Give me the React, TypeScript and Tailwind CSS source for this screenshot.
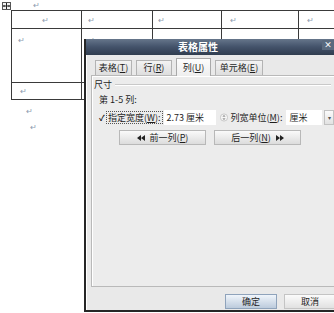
import React from "react";

const F = { fontFamily: '"Noto Sans CJK SC", "Liberation Sans", sans-serif' };

function Mark({ className = "" }: { className?: string }) {
  return <div className={"h-[8px] text-[8px] leading-[8px] text-[#8d9bb0] " + className}>↵</div>;
}

function U({ c }: { c: string }) {
  return <span className="underline underline-offset-1">{c}</span>;
}

function Tab({ label, k, w, sel }: { label: string; k: string; w: string; sel?: boolean }) {
  return (
    <div
      className={
        "flex items-center justify-center border border-b-0 text-[9px] text-[#1e1e1e] " +
        w +
        (sel
          ? " h-[18px] -mb-px border-[#a9a9a9] bg-gradient-to-b from-[#fdfdfd] to-[#eeeeee] z-10"
          : " h-[15px] border-[#b3b3b3] bg-gradient-to-b from-[#f3f3f3] to-[#dedede]")
      }
    >
      {label}(<U c={k} />)
    </div>
  );
}

function DoubleLeft() {
  return (
    <svg width="8" height="6" viewBox="0 0 8 6">
      <path d="M4 0 L0 3 L4 6 Z M8 0 L4 3 L8 6 Z" fill="#222" />
    </svg>
  );
}
function DoubleRight() {
  return (
    <svg width="8" height="6" viewBox="0 0 8 6">
      <path d="M0 0 L4 3 L0 6 Z M4 0 L8 3 L4 6 Z" fill="#222" />
    </svg>
  );
}

export default function App() {
  return (
    <div className="relative w-[334px] h-[313px] overflow-hidden bg-white" style={F}>
      {/* document */}
      <div className="flex h-[10px] items-start">
        <div className="ml-[2px] mt-[2px] flex h-[8px] w-[9px] items-center justify-center border border-[#555] bg-[#f4f4f4]">
          <svg width="7" height="6" viewBox="0 0 7 6">
            <path d="M3.5 0 V6 M0 3 H7" stroke="#222" strokeWidth="1" />
            <path d="M0 3 L1.5 1.8 V4.2 Z M7 3 L5.5 1.8 V4.2 Z" fill="#222" />
          </svg>
        </div>
        <Mark className="ml-[22px] mt-[1px]" />
      </div>
      <div className="ml-[11px] grid w-[400px] grid-cols-[70px_71px_69px_77px_113px] border-l border-t border-[#3a3a3a]">
        <div className="flex h-[18px] items-center border-b border-r border-[#3a3a3a] pl-[30px]"><Mark /></div>
        <div className="flex h-[18px] items-center border-b border-r border-[#3a3a3a] pl-[6px]"><Mark /></div>
        <div className="flex h-[18px] items-center border-b border-r border-[#3a3a3a] pl-[5px]"><Mark /></div>
        <div className="flex h-[18px] items-center border-b border-r border-[#3a3a3a] pl-[8px]"><Mark /></div>
        <div className="flex h-[18px] items-center border-b border-r border-[#3a3a3a] pl-[8px]"><Mark /></div>

        <div className="h-[54px] border-b border-r border-[#3a3a3a] pl-[6px] pt-[7px]"><Mark /></div>
        <div className="h-[54px] border-b border-r border-[#3a3a3a] pl-[6px] pt-[7px]"><Mark /></div>
        <div className="h-[54px] border-b border-r border-[#3a3a3a]" />
        <div className="h-[54px] border-b border-r border-[#3a3a3a]" />
        <div className="h-[54px] border-b border-r border-[#3a3a3a]" />

        <div className="flex h-[17px] items-center border-b border-r border-[#3a3a3a] pl-[8px]"><Mark /></div>
        <div className="h-[17px] border-b border-r border-[#3a3a3a]" />
        <div className="h-[17px] border-b border-r border-[#3a3a3a]" />
        <div className="h-[17px] border-b border-r border-[#3a3a3a]" />
        <div className="h-[17px] border-b border-r border-[#3a3a3a]" />
      </div>
      <Mark className="ml-[26px] mt-[7px]" />
      <Mark className="ml-[30px] mt-[8px]" />

      {/* dialog */}
      <div className="absolute left-[84px] top-[39px] flex h-[273px] w-[258px] flex-col border-b-2 border-l-2 border-[#262626] bg-[#e9e9e9]">
        <div className="relative flex h-[16px] items-center bg-gradient-to-b from-[#66768b] via-[#43526a] to-[#303d4f] pl-[92px]">
          <span className="text-[10px] font-bold leading-none text-white">表格属性</span>
          <span className="absolute left-[236px] top-[1px] flex h-[10px] w-[12px] items-center justify-center bg-[#5a6a7e] text-[8px] font-bold leading-none text-white">×</span>
        </div>
        <div className="flex flex-1 flex-col border-l border-white pl-[4px] pr-[4px]">
          {/* tabs */}
          <div className="mt-[2px] flex h-[18px] items-end gap-[4px] pl-[4px]">
            <Tab label="表格" k="T" w="w-[37px]" />
            <Tab label="行" k="R" w="w-[36px]" />
            <Tab label="列" k="U" w="w-[35px]" sel />
            <Tab label="单元格" k="E" w="w-[48px]" />
          </div>
          {/* panel */}
          <div className="flex h-[212px] flex-col border border-[#b9b9b9] bg-[#ececec] shadow-[inset_1px_1px_0_#fff]">
            <div className="mt-[4px] flex items-center pl-[2px] pr-[6px]">
              <span className="text-[9px] leading-none text-[#1e1e1e]">尺寸</span>
              <div className="ml-[3px] h-[2px] flex-1 border-b border-t border-b-white border-t-[#c9c9c9]" />
            </div>
            <div className="mt-[6px] pl-[7px] text-[9px] leading-none text-[#1e1e1e]">
              第 1-5 列:
            </div>
            <div className="mt-[6px] flex h-[15px] items-center pl-[7px] text-[9px] text-[#1e1e1e]">
              <span className="w-[7px] text-[8px] font-bold leading-none">✓</span>
              <span className="border border-dotted border-[#555] px-[1px] leading-[11px]">
                指定宽度(<U c="W" />):
              </span>
              <div className="ml-[1px] flex h-[15px] w-[52px] items-center bg-white pl-[3px] leading-none">
                2.73 厘米
              </div>
              <svg className="ml-[4px]" width="8" height="9" viewBox="0 0 8 9">
                <circle cx="4" cy="4.5" r="3.6" fill="#f6f6f6" stroke="#b0b0b0" strokeWidth="0.6" />
                <path d="M4 1.8 L5.6 3.8 H2.4 Z M4 7.2 L5.6 5.2 H2.4 Z" fill="#999" />
              </svg>
              <span className="ml-[3px] leading-none">列宽单位(<U c="M" />):</span>
              <div className="ml-[4px] flex h-[15px] w-[36px] items-center bg-white pl-[3px] leading-none">厘米</div>
              <div className="ml-[2px] flex h-[15px] w-[10px] items-center justify-center border border-[#c2c2c2] bg-gradient-to-b from-[#fbfbfb] to-[#e2e2e2] text-[6px] leading-none text-[#555]">▾</div>
            </div>
            <div className="mt-[5px] flex gap-[8px] pl-[27px]">
              <div className="flex h-[15px] w-[87px] items-center justify-center gap-[5px] border border-[#b8b8b8] bg-gradient-to-b from-[#fafafa] to-[#dcdcdc] text-[9px] leading-none text-[#1e1e1e]">
                <DoubleLeft />
                <span>前一列(<U c="P" />)</span>
              </div>
              <div className="flex h-[15px] w-[87px] items-center justify-center gap-[5px] border border-[#b8b8b8] bg-gradient-to-b from-[#fafafa] to-[#dcdcdc] text-[9px] leading-none text-[#1e1e1e]">
                <span>后一列(<U c="N" />)</span>
                <DoubleRight />
              </div>
            </div>
          </div>
          {/* bottom buttons */}
          <div className="mt-[7px] flex gap-[7px] pl-[134px]">
            <div className="flex h-[15px] w-[52px] items-center justify-center border border-[#8fa3bb] bg-gradient-to-b from-[#f0f5fb] to-[#bccbdc] text-[9px] leading-none text-[#1e1e1e]">
              确定
            </div>
            <div className="flex h-[15px] w-[52px] items-center justify-center border border-[#c4c4c4] bg-gradient-to-b from-[#fbfbfb] to-[#e1e1e1] text-[9px] leading-none text-[#1e1e1e]">
              取消
            </div>
          </div>
        </div>
      </div>
    </div>
  );
}
